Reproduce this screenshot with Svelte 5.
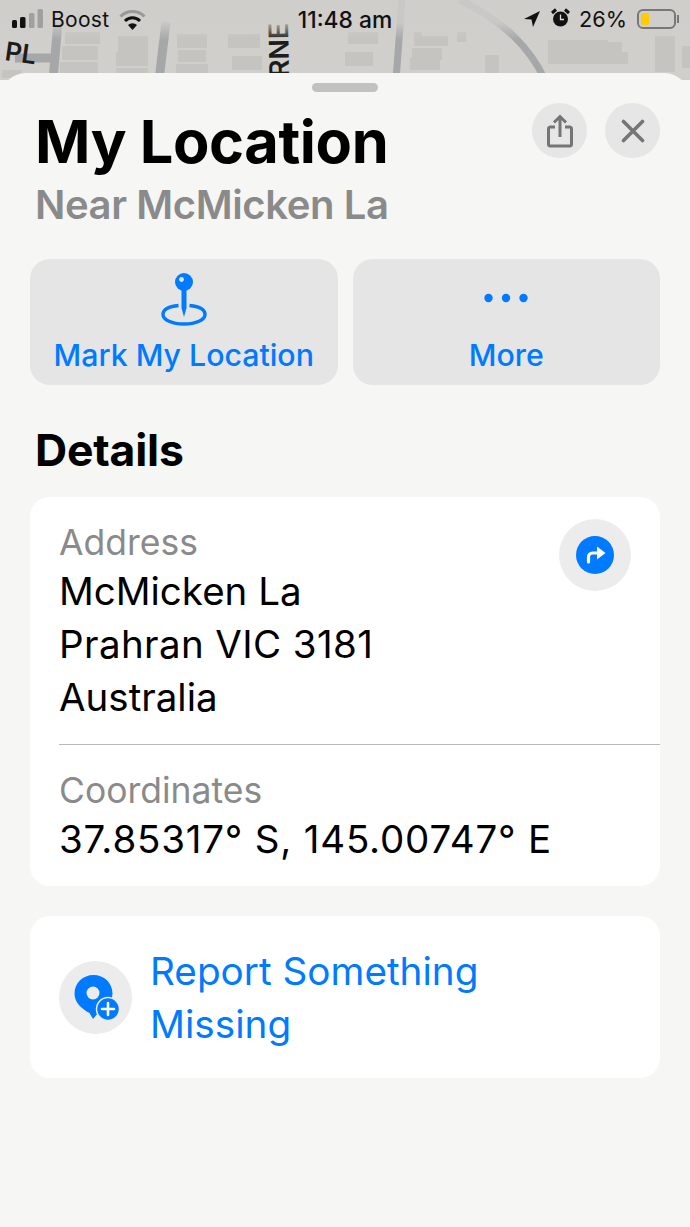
<script lang="ts">
    const details = [
        { label: 'Address', lines: ['McMicken La', 'Prahran VIC 3181', 'Australia'] },
        { label: 'Coordinates', lines: ['37.85317° S, 145.00747° E'] },
    ]
</script>

<div class="screen">
    <svg class="map" width="690" height="80" viewBox="0 0 690 80">
        <defs>
            <linearGradient id="fade" x1="0" y1="0" x2="0" y2="1">
                <stop offset="0.28" stop-color="#cfcecb" stop-opacity="0.85" />
                <stop offset="0.5" stop-color="#cfcecb" stop-opacity="0" />
            </linearGradient>
        </defs>
        <rect width="690" height="80" fill="#d0cfcb" />
        <g fill="#c5c4c0">
            <path d="M65 32h35v12H65zM62 46h36v14H62zM60 62h38v14H60z" />
            <path d="M118 36h30v16h-30zM116 52h32v14h-32zM116 68h32v10h-32z" />
            <path d="M177 34h30v14h-30zM178 50h28v12h-28zM176 64h32v12h-32z" />
            <path d="M228 34h32v14h-32zM232 56h30v14h-30z" />
            <path d="M348 32h30v12h-30zM345 52h28v14h-28z" />
            <path d="M414 32h8v10h-8zM414 36h34v10h-34zM412 48h30v12h-30zM410 58h30v12h-30z" />
            <path d="M485 55h14v18h-14zM457 32h9v10h-9z" />
            <path d="M548 40h60v12h-60zM548 52h80v12h-80zM606 42h16v12h-16z" />
            <path d="M655 36h20v36h-20zM682 46h8v22h-8zM2 70h20v8H2z" />
        </g>
        <g fill="none" stroke="#a5a7a9">
            <path d="M58 22 L53 80M15 58h40" stroke-width="9" />
            <path d="M166 22 L159 80" stroke-width="9" />
            <path d="M402 0 L396 80" stroke-width="7" />
            <path d="M460 0 C505 22 530 48 545 80" stroke-width="7" />
        </g>
        <g font-family="Inter, sans-serif" font-weight="600" fill="#1c1c1c">
            <text x="4" y="60" font-size="26" transform="rotate(8 4 60)">PL</text>
            <text x="0" y="0" font-size="27" transform="translate(289 77) rotate(-91)">RNE</text>
        </g>
        <rect width="690" height="80" fill="url(#fade)" />
    </svg>

    <div class="status">
        <div class="left">
            <svg class="signal" width="32" height="20" viewBox="0 0 32 20">
                <rect x="0" y="11" width="5" height="8" rx="1.500" fill="#111" />
                <rect x="8" y="8" width="5.500" height="11" rx="1.500" fill="#111" />
                <rect x="17" y="4" width="5.500" height="15" rx="1.500" fill="#a0a0a0" />
                <rect x="25.500" y="0" width="5.500" height="19" rx="1.500" fill="#a0a0a0" />
            </svg>
            <span class="carrier">Boost</span>
            <svg width="27" height="21" viewBox="0 0 27 21">
                <path d="M1.500 7.500 A17 17 0 0 1 25.500 7.500" fill="none" stroke="#999" stroke-width="3" />
                <path d="M6 12 A10.500 10.500 0 0 1 21 12" fill="none" stroke="#111" stroke-width="3" />
                <path d="M13.500 21 L9 16 A6.500 6.500 0 0 1 18 16 Z" fill="#111" />
            </svg>
        </div>
        <span class="time">11:48 am</span>
        <div class="right">
            <svg width="16" height="16" viewBox="0 0 16 16"><path d="M16 0 L0 8 L7.500 8.500 L9 16 Z" fill="#111" /></svg>
            <svg class="alarm" width="19" height="20" viewBox="0 0 19 20">
                <circle cx="9.500" cy="11" r="7.500" fill="#111" />
                <path d="M9.500 6.500v5h3.500" fill="none" stroke="#ddd" stroke-width="1.300" />
                <path d="M1 5 L5 1.500M18 5 L14 1.500" stroke="#111" stroke-width="3" />
            </svg>
            <span class="pct">26%</span>
            <div class="battery"><div class="charge"></div></div>
        </div>
    </div>

    <div class="sheet">
        <div class="grabber"></div>
        <header>
            <div>
                <h1>My Location</h1>
                <p class="near">Near McMicken La</p>
            </div>
            <div class="round-btns">
                <button class="round" aria-label="Share">
                    <svg width="28" height="34" viewBox="0 0 28 34" fill="none" stroke="#757575" stroke-width="3">
                        <path d="M9 13H4.500a2 2 0 0 0-2 2v15a2 2 0 0 0 2 2h19a2 2 0 0 0 2-2V15a2 2 0 0 0-2-2H19" />
                        <path d="M14 23V3M8 8.500 14 2.500 20 8.500" />
                    </svg>
                </button>
                <button class="round" aria-label="Close">
                    <svg width="24" height="24" viewBox="0 0 24 24" fill="none" stroke="#757575" stroke-width="3.600" stroke-linecap="round">
                        <path d="M2.500 2.500 21.500 21.500M21.500 2.500 2.500 21.500" />
                    </svg>
                </button>
            </div>
        </header>

        <div class="actions">
            <button class="action">
                <svg width="46" height="54" viewBox="0 0 46 54">
                    <path d="M17.500 32.500 C7 33.500 2 37 2 41.500 C2 47 11 51 23 51 C35 51 44 47 44 41.500 C44 37 39 33.500 28.500 32.500" fill="none" stroke="#007aff" stroke-width="3.400" />
                    <circle cx="23" cy="9" r="9" fill="#007aff" />
                    <circle cx="20.500" cy="6.500" r="2.400" fill="#dfe8f2" />
                    <path d="M20.500 15h5v20L23 44l-2.500-9z" fill="#007aff" />
                </svg>
                <span>Mark My Location</span>
            </button>
            <button class="action">
                <svg width="46" height="54" viewBox="0 0 46 54" fill="#007aff">
                    <circle cx="5.500" cy="25" r="4.200" />
                    <circle cx="23" cy="25" r="4.200" />
                    <circle cx="40.500" cy="25" r="4.200" />
                </svg>
                <span>More</span>
            </button>
        </div>

        <h2>Details</h2>

        <section class="card details">
            {#each details as d, i}
                <div class="row" class:divided={i > 0}>
                    <div class="label">{d.label}</div>
                    {#each d.lines as line}
                        <div class="value" class:num={/\d/.test(line)}>{line}</div>
                    {/each}
                    {#if i === 0}
                        <span class="dir-wrap">
                            <svg width="38" height="38" viewBox="0 0 38 38">
                                <circle cx="19" cy="19" r="19" fill="#007aff" />
                                <path d="M12.500 26v-5a4 4 0 0 1 4-4h5" fill="none" stroke="#fff" stroke-width="3.200" stroke-linecap="round" />
                                <path d="M21 10.500 29.500 17 21 23.500z" fill="#fff" />
                            </svg>
                        </span>
                    {/if}
                </div>
            {/each}
        </section>

        <section class="card report">
            <span class="report-icon">
                <svg width="48" height="48" viewBox="0 0 48 48">
                    <path d="M21.500 2C32 2 40.500 10 40.500 20.500 C40.500 30 32 35 26 40 L21 46 L17.500 40 C10 36 2.500 30 2.500 20.500 C2.500 10 11 2 21.500 2Z" fill="#007aff" />
                    <circle cx="21" cy="20" r="6.500" fill="#ececec" />
                    <circle cx="36" cy="36" r="11.500" fill="#007aff" stroke="#ececec" stroke-width="1.500" />
                    <path d="M36 30v12M30 36h12" stroke="#fff" stroke-width="2.600" stroke-linecap="round" />
                </svg>
            </span>
            <span class="report-text">Report Something Missing</span>
        </section>
    </div>
</div>

<style>
    :global(body) {
        margin: 0;
        background: #f6f6f5;
    }
    .screen {
        position: relative;
        width: 690px;
        height: 1227px;
        overflow: hidden;
        font-family: Inter, "Liberation Sans", sans-serif;
    }
    .map {
        position: absolute;
        top: 0;
        left: 0;
    }
    .status {
        position: relative;
        height: 73px;
        display: grid;
        grid-template-columns: 1fr auto 1fr;
        align-items: start;
        padding: 0 10px;
        color: #111;
        font-size: 21px;
    }
    .left, .right {
        display: flex;
        align-items: center;
        height: 38px;
    }
    .signal { margin: 0 7px 0 2px; }
    .carrier { margin-right: 10px; letter-spacing: 0.3px; }
    .right { justify-content: flex-end; gap: 10px; }
    .alarm { margin: -2px -1px 0 1px; }
    .time { font-size: 22.8px; font-weight: 500; line-height: 40px; }
    .pct { font-size: 21.7px; }
    .battery {
        position: relative;
        width: 39px;
        height: 20px;
        box-sizing: border-box;
        border: 2px solid #777;
        border-radius: 6px;
        padding: 2px;
        margin-right: 4px;
    }
    .battery::after {
        content: '';
        position: absolute;
        right: -5px;
        top: 4px;
        width: 2px;
        height: 8px;
        background: #777;
    }
    .charge {
        width: 8px;
        height: 100%;
        background: #ffcc00;
        border-radius: 2px;
    }
    .sheet {
        position: relative;
        background: #f6f6f5;
        border-radius: 26px 26px 0 0;
        height: 1154px;
        padding: 0 30px;
        box-sizing: border-box;
    }
    .grabber {
        position: absolute;
        top: 10px;
        left: 312px;
        width: 66px;
        height: 9px;
        border-radius: 5px;
        background: #c2c2c2;
    }
    header {
        display: flex;
        justify-content: space-between;
        padding: 30px 0 0 5px;
        height: 186px;
        box-sizing: border-box;
    }
    h1 {
        margin: 0;
        font-size: 59.5px;
        line-height: 76px;
        font-weight: 700;
        color: #000;
        letter-spacing: -0.4px;
    }
    .near {
        margin: 1px 0 0;
        font-size: 40px;
        line-height: 50px;
        font-weight: 600;
        color: #8a8a8a;
        letter-spacing: -0.4px;
    }
    .round-btns {
        display: flex;
        gap: 18px;
    }
    .round {
        width: 55px;
        height: 55px;
        border-radius: 50%;
        border: 0;
        padding: 0;
        background: #e6e6e6;
        display: flex;
        align-items: center;
        justify-content: center;
    }
    .actions {
        display: flex;
        gap: 15px;
    }
    .action {
        flex: 1;
        height: 126px;
        border: 0;
        border-radius: 20px;
        background: #e5e5e5;
        color: #007aff;
        font-family: inherit;
        font-size: 30.3px;
        font-weight: 500;
        display: flex;
        flex-direction: column;
        align-items: center;
        padding: 14px 0 0;
        gap: 10px;
    }
    h2 {
        margin: 0;
        padding: 36px 0 0 5px;
        height: 112px;
        box-sizing: border-box;
        font-size: 44.5px;
        line-height: 58px;
        font-weight: 700;
        color: #000;
        letter-spacing: -0.2px;
    }
    .card {
        background: #fff;
        border-radius: 20px;
    }
    .row {
        position: relative;
        padding: 23px 30px 20px 29px;
    }
    .row.divided {
        padding-top: 24px;
    }
    .row.divided::before {
        content: '';
        position: absolute;
        top: 0;
        left: 29px;
        right: 0;
        height: 1px;
        background: #b9b9b9;
    }
    .label {
        font-size: 35.5px;
        line-height: 45px;
        color: #8a8a8a;
    }
    .value {
        font-size: 38.5px;
        line-height: 53px;
        color: #000;
    }
    .value.num {
        letter-spacing: 0.4px;
    }
    .divided .value.num {
        letter-spacing: 0.8px;
    }
    .dir-wrap {
        position: absolute;
        top: 22px;
        right: 29px;
        width: 72px;
        height: 72px;
        border-radius: 50%;
        background: #ececec;
        display: flex;
        align-items: center;
        justify-content: center;
    }
    .report {
        margin-top: 30px;
        height: 162px;
        display: flex;
        align-items: center;
        gap: 18px;
        padding: 0 29px;
    }
    .report-icon {
        flex: none;
        width: 73px;
        height: 73px;
        border-radius: 50%;
        background: #ececec;
        display: flex;
        align-items: center;
        justify-content: center;
    }
    .report-text {
        width: 400px;
        padding-top: 2px;
        font-size: 38.7px;
        line-height: 53px;
        color: #007aff;
    }
</style>
